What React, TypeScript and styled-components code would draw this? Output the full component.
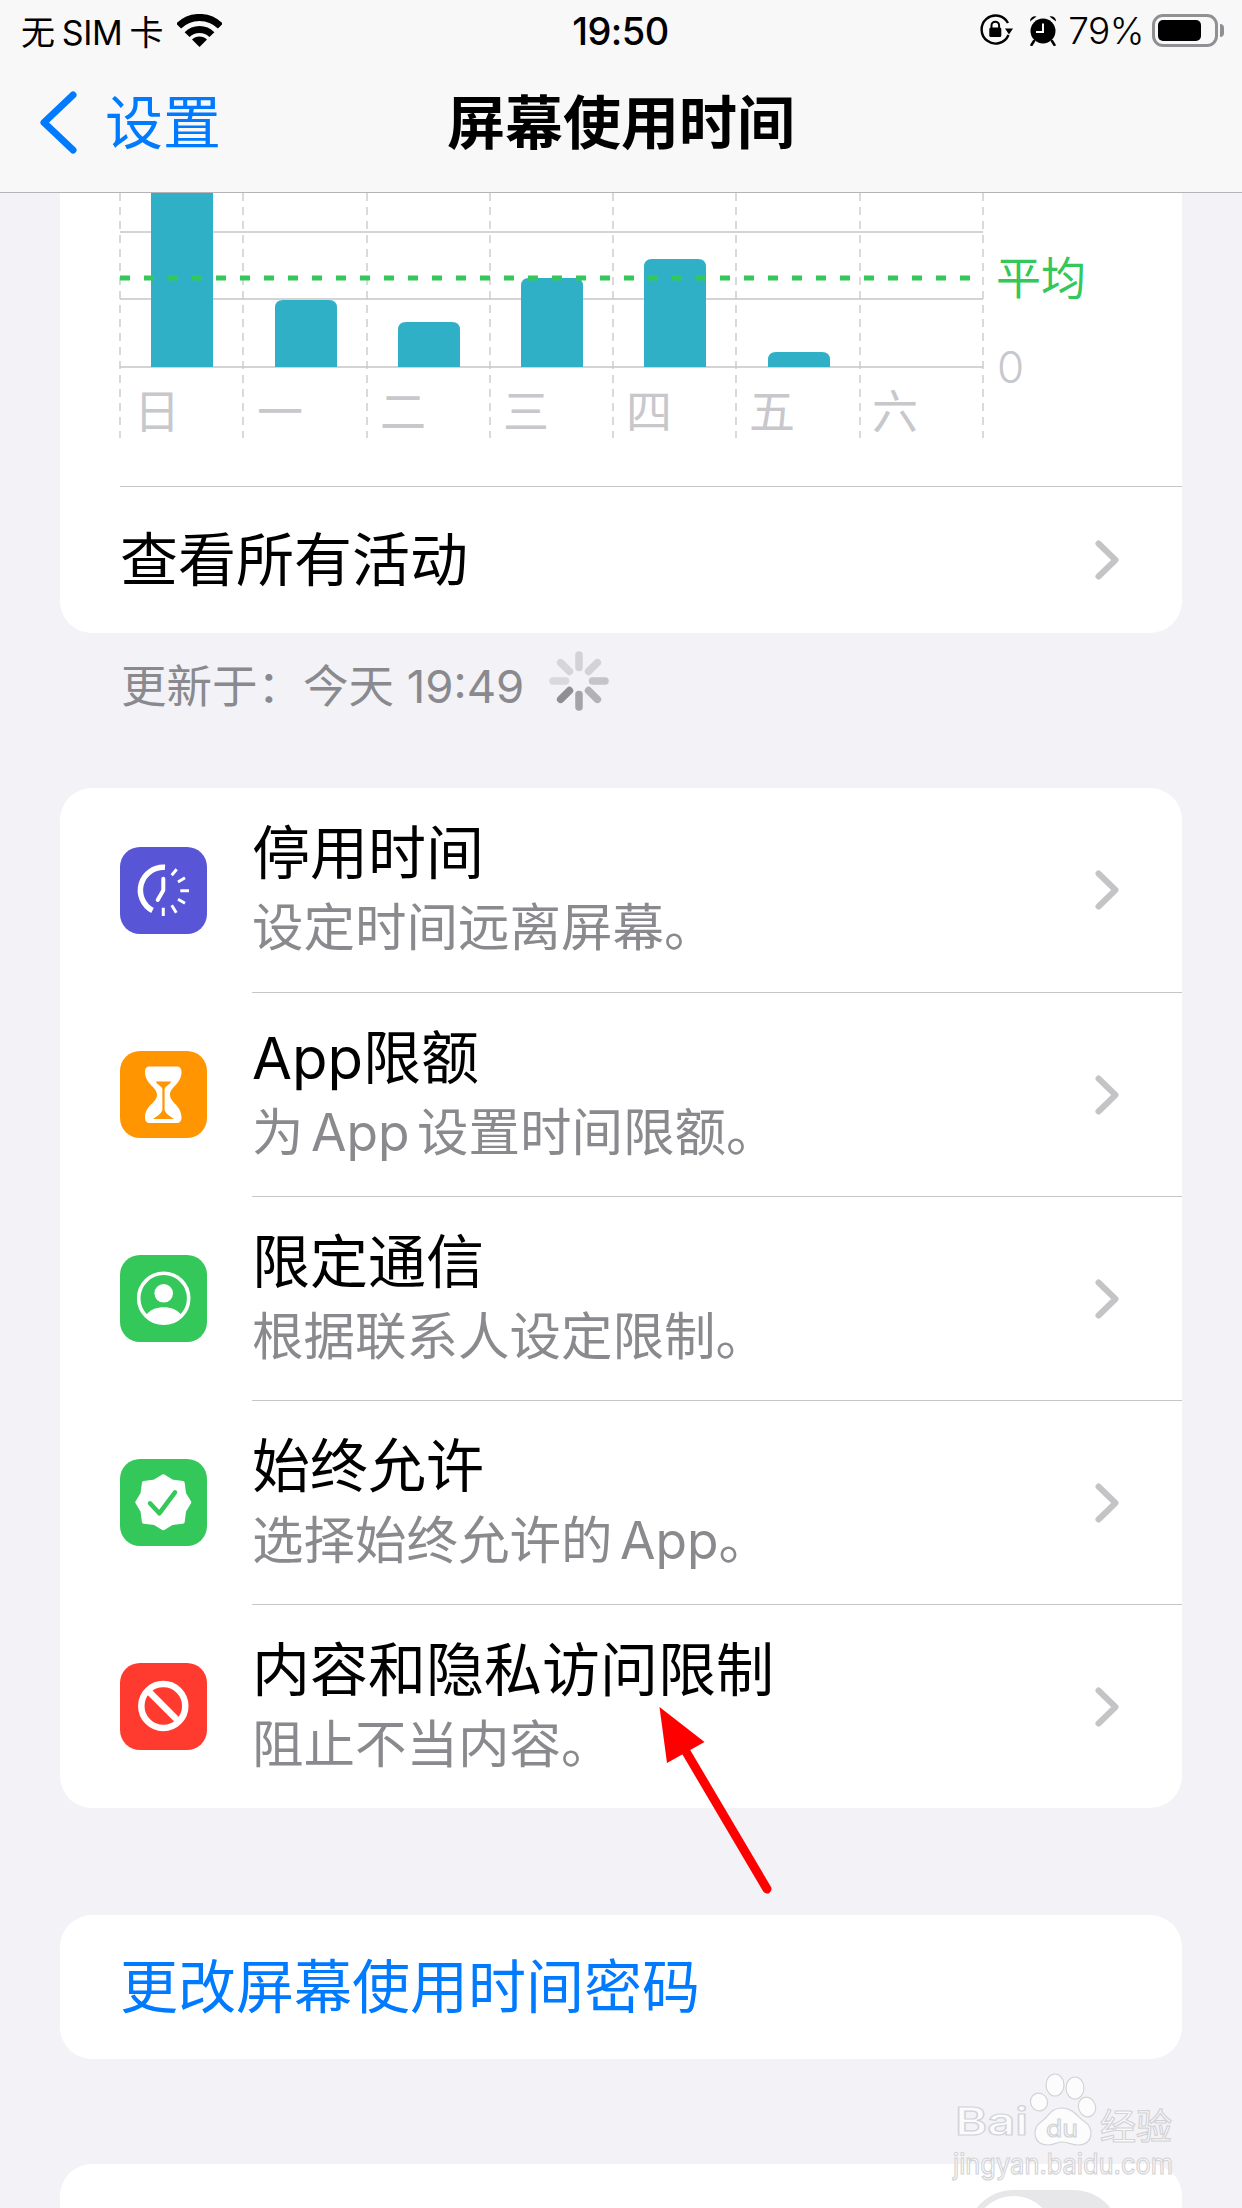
import React from 'react';
import styled, { createGlobalStyle } from 'styled-components';

const FONT = `Inter, "Noto Sans CJK SC", sans-serif`;

const GlobalStyle = createGlobalStyle`
  html, body {
    margin: 0;
    padding: 0;
    background: #f2f2f7;
  }
`;

const Page = styled.div`
  position: relative;
  width: 1242px;
  height: 2208px;
  overflow: hidden;
  background: #f2f2f7;
  font-family: ${FONT};
  color: #000;
`;

/* top bars */
const Header = styled.header`
  height: 193px;
  box-sizing: border-box;
  background: #f8f8f8;
  border-bottom: 1px solid #b4b4b6;
`;

const StatusBar = styled.div`
  height: 60px;
  display: grid;
  grid-template-columns: 1fr auto 1fr;
  align-items: center;
  padding: 0 16px 0 21px;
  font-size: 34px;
`;

const StatusLeft = styled.div`
  display: flex;
  align-items: center;
  gap: 14px;
`;

const CarrierText = styled.span`
  word-spacing: -2px;
  letter-spacing: -0.4px;
`;

const StatusRight = styled.div`
  display: flex;
  align-items: center;
  justify-content: flex-end;
  gap: 8px;

  & > svg:first-child {
    margin-right: 7px;
  }
`;

const Clock = styled.div`
  font-size: 38px;
  font-weight: 500;
  letter-spacing: -0.5px;
  margin: 2px 6px 0 0;
`;

const Percent = styled.span`
  margin-left: 2px;
  font-size: 37px;
  font-weight: 300;
  letter-spacing: -0.5px;
`;

const Battery = styled.div`
  position: relative;
  width: 66px;
  height: 33px;
  box-sizing: border-box;
  border: 3px solid #909094;
  border-radius: 11px;
  padding: 3px;
  margin-right: 8px;

  &::before {
    content: '';
    display: block;
    width: 43px;
    height: 100%;
    background: #000;
    border-radius: 5px;
  }

  &::after {
    content: '';
    position: absolute;
    right: -9px;
    top: 7px;
    width: 4px;
    height: 13px;
    background: #909094;
    border-radius: 0 4px 4px 0;
  }
`;

const NavBar = styled.nav`
  height: 132px;
  display: grid;
  grid-template-columns: 1fr auto 1fr;
  align-items: center;
  padding: 0 40px 14px;
  box-sizing: border-box;
`;

const BackLink = styled.div`
  display: flex;
  align-items: center;
  gap: 28px;
  font-size: 58px;
  color: #007aff;

  svg {
    margin-top: 6px;
  }
`;

const NavTitle = styled.h1`
  margin: 0;
  font-size: 58px;
  font-weight: 700;
`;

/* groups */
const Card = styled.section<{ $top?: number; $open?: boolean }>`
  margin: ${(p) => p.$top ?? 0}px 60px 0;
  background: #fff;
  border-radius: ${(p) => (p.$open ? '0 0 32px 32px' : '32px')};
  overflow: hidden;
`;

const ChartSvg = styled.svg`
  display: block;
  width: 1122px;
  height: 293px;
`;

const DayLabel = styled.text`
  font-family: ${FONT};
  font-size: 46px;
  font-weight: 400;
  fill: #c7c7cc;
  text-anchor: middle;
`;

const LinkRow = styled.div`
  height: 147px;
  margin-left: 60px;
  padding-right: 63px;
  border-top: 1px solid #c6c6c8;
  box-sizing: border-box;
  display: flex;
  align-items: center;
  justify-content: space-between;
  font-size: 58px;
`;

const LinkLabel = styled.span`
  margin-bottom: 8px;
`;

const UpdatedLine = styled.div`
  height: 155px;
  padding: 26px 0 0 121px;
  box-sizing: border-box;
  display: flex;
  align-items: flex-start;
  gap: 24px;
  font-size: 45.5px;
  line-height: 56px;
  color: #8a8a8e;
`;

const SpinnerSvg = styled.svg`
  width: 62px;
  height: 62px;
  flex: none;
  margin-top: -9px;
`;

const Row = styled.div`
  height: 204px;
  display: flex;
  align-items: stretch;

  &:first-child > div:last-child {
    border-top: none;
  }
`;

const IconSlot = styled.div`
  width: 192px;
  flex: none;
  padding-left: 60px;
  box-sizing: border-box;
  display: flex;
  align-items: center;
`;

const IconTile = styled.div<{ $bg: string }>`
  width: 87px;
  height: 87px;
  border-radius: 20px;
  background: ${(p) => p.$bg};

  svg {
    display: block;
    width: 87px;
    height: 87px;
  }
`;

const RowBody = styled.div`
  flex: 1;
  min-width: 0;
  border-top: 1px solid #c6c6c8;
  padding-right: 63px;
  display: flex;
  align-items: center;
  justify-content: space-between;
`;

const RowTitle = styled.div`
  font-size: 58px;
  line-height: 74px;
`;

const RowSub = styled.div`
  font-size: 51.5px;
  line-height: 74px;
  word-spacing: -7px;
  color: #8a8a8e;
`;

const ActionRow = styled.div`
  height: 144px;
  padding: 0 0 8px 60px;
  box-sizing: border-box;
  display: flex;
  align-items: center;
  font-size: 58px;
  color: #007aff;
`;

const ToggleRow = styled.div`
  height: 144px;
  padding: 26px 62px 0 0;
  box-sizing: border-box;
  display: flex;
  justify-content: flex-end;
`;

const Toggle = styled.div`
  width: 153px;
  height: 93px;
  padding: 6px;
  box-sizing: border-box;
  border-radius: 47px;
  background: #e7e7e9;

  &::before {
    content: '';
    display: block;
    width: 81px;
    height: 81px;
    border-radius: 50%;
    background: #fff;
  }
`;

/* overlays */
const ArrowSvg = styled.svg`
  position: absolute;
  left: 640px;
  top: 1690px;
  width: 150px;
  height: 220px;
`;

const WatermarkSvg = styled.svg`
  position: absolute;
  left: 940px;
  top: 2070px;
  width: 250px;
  height: 138px;
`;

const WatermarkText = styled.text<{ $size: number; $weight?: number }>`
  font-family: ${FONT};
  font-size: ${(p) => p.$size}px;
  font-weight: ${(p) => p.$weight ?? 400};
  fill: rgba(255, 255, 255, 0.75);
  stroke: #d3d3d6;
  stroke-width: 1.2px;
`;

const Chevron = () => (
  <svg width="24" height="40" viewBox="0 0 24 40" fill="none">
    <path d="M3.5 3.5 20.5 20 3.5 36.5" stroke="#c4c4c7" strokeWidth="6" strokeLinecap="round" strokeLinejoin="round" />
  </svg>
);

const WifiIcon = () => (
  <svg width="45" height="33" viewBox="0 0 45 33">
    <g fill="none" stroke="#000" strokeWidth="7">
      <path d="M1.6 12.1A29.5 29.5 0 0 1 43.4 12.1" />
      <path d="M10.1 20.6A17.5 17.5 0 0 1 34.9 20.6" />
    </g>
    <path d="M22.5 33 15 25.5A10.6 10.6 0 0 1 30 25.5Z" fill="#000" />
  </svg>
);

const RotationLockIcon = () => (
  <svg width="34" height="34" viewBox="0 0 34 34" fill="none">
    <path d="M29.5 22A14 14 0 1 1 29 10" stroke="#000" strokeWidth="2.4" />
    <path d="M26 15.5h8L30 21.5Z" fill="#000" />
    <path d="M12.5 15v-2.5a3.8 3.8 0 0 1 7.6 0V15" stroke="#000" strokeWidth="2" />
    <rect x="10.3" y="14.5" width="12" height="9.5" rx="1.5" fill="#000" />
  </svg>
);

const AlarmIcon = () => (
  <svg width="30" height="32" viewBox="0 0 30 32">
    <circle cx="15" cy="17" r="12.5" fill="#000" />
    <path d="M2 7.5A5 5 0 0 1 8.5 2.5ZM28 7.5A5 5 0 0 0 21.5 2.5Z" fill="#000" />
    <path d="M6 27 3.5 31M24 27 26.5 31" stroke="#000" strokeWidth="2.5" strokeLinecap="round" />
    <path d="M15 9.5V18H8" fill="none" stroke="#fff" strokeWidth="2" />
  </svg>
);

const BackChevron = () => (
  <svg width="37" height="63" viewBox="0 0 37 63" fill="none">
    <path d="M33 4 4 31.5 33 59" stroke="#007aff" strokeWidth="7" strokeLinecap="round" strokeLinejoin="round" />
  </svg>
);

const DowntimeIcon = () => (
  <svg viewBox="0 0 87 87" fill="none" stroke="#fff" strokeLinecap="butt">
    <path d="M45 20.3A23 23 0 0 0 32.5 63.5" strokeWidth="5.5" />
    <path d="M43.3 31.7V43.3L37.7 53" strokeWidth="4" strokeLinecap="round" strokeLinejoin="round" />
    <path
      d="M51.7 28.3 56.7 22.3M58 35 65 30.7M60.3 43.7H69M58 52.3 65 56.3M51.7 58.3 56.3 65.7M43.3 60.7V69"
      strokeWidth="3"
    />
  </svg>
);

const HourglassIcon = () => (
  <svg viewBox="0 0 87 87">
    <path
      d="M30 15.5H56.5C60 15.5 61.5 17.5 61.5 21C61.5 33 50 36 50 43.7C50 51.5 61.5 54.5 61.5 66.5C61.5 70 60 72 56.5 72H30C26.5 72 25 70 25 66.5C25 54.5 37 51.5 37 43.7C37 36 25 33 25 21C25 17.5 26.5 15.5 30 15.5Z"
      fill="#fff"
    />
    <path
      d="M36 30.5H51C50.5 33.5 45.5 34.5 44.6 38V59C46 63 50 65.5 54 68H33C37 65.5 41 63 42.4 59V38C41.5 34.5 36.5 33.5 36 30.5Z"
      fill="#ff9500"
    />
  </svg>
);

const ContactIcon = () => (
  <svg viewBox="0 0 87 87" fill="none">
    <circle cx="43.7" cy="43.3" r="25" stroke="#fff" strokeWidth="3.6" />
    <circle cx="43.7" cy="38.3" r="9.3" fill="#fff" />
    <path d="M25.5 60.5C30 54.5 37 52.3 43.7 52.3S57.5 54.5 62 60.5A25 25 0 0 1 25.5 60.5Z" fill="#fff" />
  </svg>
);

// 16 point scallop, the round stroke softens the tips
const badgePoints = Array.from({ length: 16 }, (_, i) => {
  const r = i % 2 === 1 ? 22.5 : i % 4 === 0 ? 26 : 27.5;
  const a = (i * Math.PI) / 8;
  return `${(43.3 + r * Math.sin(a)).toFixed(1)},${(43.3 - r * Math.cos(a)).toFixed(1)}`;
}).join(' ');

const BadgeIcon = () => (
  <svg viewBox="0 0 87 87" fill="none">
    <polygon points={badgePoints} fill="#fff" stroke="#fff" strokeWidth="4" strokeLinejoin="round" />
    <path d="M30 44.3 39.3 54.3 55 33.3" stroke="#34c759" strokeWidth="4.5" strokeLinecap="round" strokeLinejoin="round" />
  </svg>
);

const BlockedIcon = () => (
  <svg viewBox="0 0 87 87" fill="none" stroke="#fff" strokeWidth="6.5">
    <circle cx="43.3" cy="43" r="22" />
    <path d="M27.7 27.4 59 58.7" />
  </svg>
);

const spokes = ['#d3d3d7', '#d3d3d7', '#c5c5c9', '#b2b2b6', '#a4a4a8', '#8f8f93', '#d9d9dd', '#d6d6da'];

const Spinner = () => (
  <SpinnerSvg viewBox="-31 -31 62 62">
    {spokes.map((c, i) => (
      <line key={i} x1="0" y1="-13.5" x2="0" y2="-26" stroke={c} strokeWidth="7.5" strokeLinecap="round" transform={`rotate(${i * 45})`} />
    ))}
  </SpinnerSvg>
);

const gridX = [120, 243, 367, 490, 613, 736, 860, 983];
const bars = [
  { x: 151, top: 150 },
  { x: 275, top: 300 },
  { x: 398, top: 322 },
  { x: 521, top: 278 },
  { x: 644, top: 259 },
  { x: 768, top: 352 },
];
const days = ['日', '一', '二', '三', '四', '五', '六'];

const ActivityChart = () => (
  <ChartSvg viewBox="60 193 1122 293">
    {gridX.map((x) => (
      <line key={x} x1={x} y1="193" x2={x} y2="438" stroke="#c6c6c8" strokeWidth="1.3" strokeDasharray="8 6" />
    ))}
    {[232, 299, 367].map((y) => (
      <line key={y} x1="120" y1={y} x2="983" y2={y} stroke="#c6c6c8" strokeWidth="1.5" />
    ))}
    {bars.map((b) => (
      <path
        key={b.x}
        d={`M${b.x} 367V${b.top + 8}Q${b.x} ${b.top} ${b.x + 8} ${b.top}H${b.x + 54}Q${b.x + 62} ${b.top} ${b.x + 62} ${b.top + 8}V367Z`}
        fill="#30b0c7"
      />
    ))}
    <line x1="120" y1="278" x2="980" y2="278" stroke="#34c759" strokeWidth="5" strokeDasharray="10 14" />
    <text x="996" y="295" fontFamily={FONT} fontSize="45" fill="#34c759">
      平均
    </text>
    <text x="997" y="383" fontFamily={FONT} fontSize="44" fontWeight="300" fill="#c7c7cc">
      0
    </text>
    {days.map((d, i) => (
      <DayLabel key={d} x={157 + i * 123} y="428">
        {d}
      </DayLabel>
    ))}
  </ChartSvg>
);

const Watermark = () => (
  <WatermarkSvg viewBox="0 0 250 138">
    <g fill="rgba(255,255,255,.75)" stroke="#d3d3d6" strokeWidth="1.2">
      <ellipse cx="115" cy="15" rx="9" ry="11" />
      <ellipse cx="135" cy="18" rx="9" ry="11" />
      <ellipse cx="99" cy="32" rx="8.5" ry="9" transform="rotate(-25 99 32)" />
      <ellipse cx="147" cy="37" rx="8.5" ry="10" transform="rotate(-20 147 37)" />
      <path d="M122 38C110 38 108 48 101 52 92 57 92 75 108 75 114 75 117 72 122 72S132 75 138 75C154 75 154 57 145 52 138 48 134 38 122 38Z" />
    </g>
    <WatermarkText $size={38} $weight={600} x="15" y="65" textLength="73" lengthAdjust="spacingAndGlyphs">
      Bai
    </WatermarkText>
    <WatermarkText $size={24} x="106" y="67" textLength="32" lengthAdjust="spacingAndGlyphs">
      du
    </WatermarkText>
    <WatermarkText $size={36} x="160" y="70">
      经验
    </WatermarkText>
    <WatermarkText $size={28} x="13" y="104" textLength="220" lengthAdjust="spacingAndGlyphs">
      jingyan.baidu.com
    </WatermarkText>
  </WatermarkSvg>
);

const features = [
  { title: '停用时间', sub: '设定时间远离屏幕。', bg: '#5856d6', Icon: DowntimeIcon },
  { title: 'App限额', sub: '为 App 设置时间限额。', bg: '#ff9500', Icon: HourglassIcon },
  { title: '限定通信', sub: '根据联系人设定限制。', bg: '#34c759', Icon: ContactIcon },
  { title: '始终允许', sub: '选择始终允许的 App。', bg: '#34c759', Icon: BadgeIcon },
  { title: '内容和隐私访问限制', sub: '阻止不当内容。', bg: '#ff3b30', Icon: BlockedIcon },
];

const App: React.FC = () => {
  return (
    <Page>
      <GlobalStyle />
      <Header>
        <StatusBar>
          <StatusLeft>
            <CarrierText>无 SIM 卡</CarrierText>
            <WifiIcon />
          </StatusLeft>
          <Clock>19:50</Clock>
          <StatusRight>
            <RotationLockIcon />
            <AlarmIcon />
            <Percent>79%</Percent>
            <Battery />
          </StatusRight>
        </StatusBar>
        <NavBar>
          <BackLink>
            <BackChevron />
            设置
          </BackLink>
          <NavTitle>屏幕使用时间</NavTitle>
        </NavBar>
      </Header>

      <Card $open>
        <ActivityChart />
        <LinkRow>
          <LinkLabel>查看所有活动</LinkLabel>
          <Chevron />
        </LinkRow>
      </Card>
      <UpdatedLine>
        更新于：今天 19:49
        <Spinner />
      </UpdatedLine>

      <Card>
        {features.map(({ title, sub, bg, Icon }) => (
          <Row key={title}>
            <IconSlot>
              <IconTile $bg={bg}>
                <Icon />
              </IconTile>
            </IconSlot>
            <RowBody>
              <div>
                <RowTitle>{title}</RowTitle>
                <RowSub>{sub}</RowSub>
              </div>
              <Chevron />
            </RowBody>
          </Row>
        ))}
      </Card>

      <Card $top={107}>
        <ActionRow>更改屏幕使用时间密码</ActionRow>
      </Card>

      <Card $top={105}>
        <ToggleRow>
          <Toggle />
        </ToggleRow>
      </Card>

      <ArrowSvg viewBox="640 1690 150 220">
        <path d="M659.5 1707 704.5 1742 667 1763Z" fill="#f00" />
        <path d="M685 1750 767 1889" stroke="#f00" strokeWidth="9" strokeLinecap="round" />
      </ArrowSvg>
      <Watermark />
    </Page>
  );
};

export default App;
